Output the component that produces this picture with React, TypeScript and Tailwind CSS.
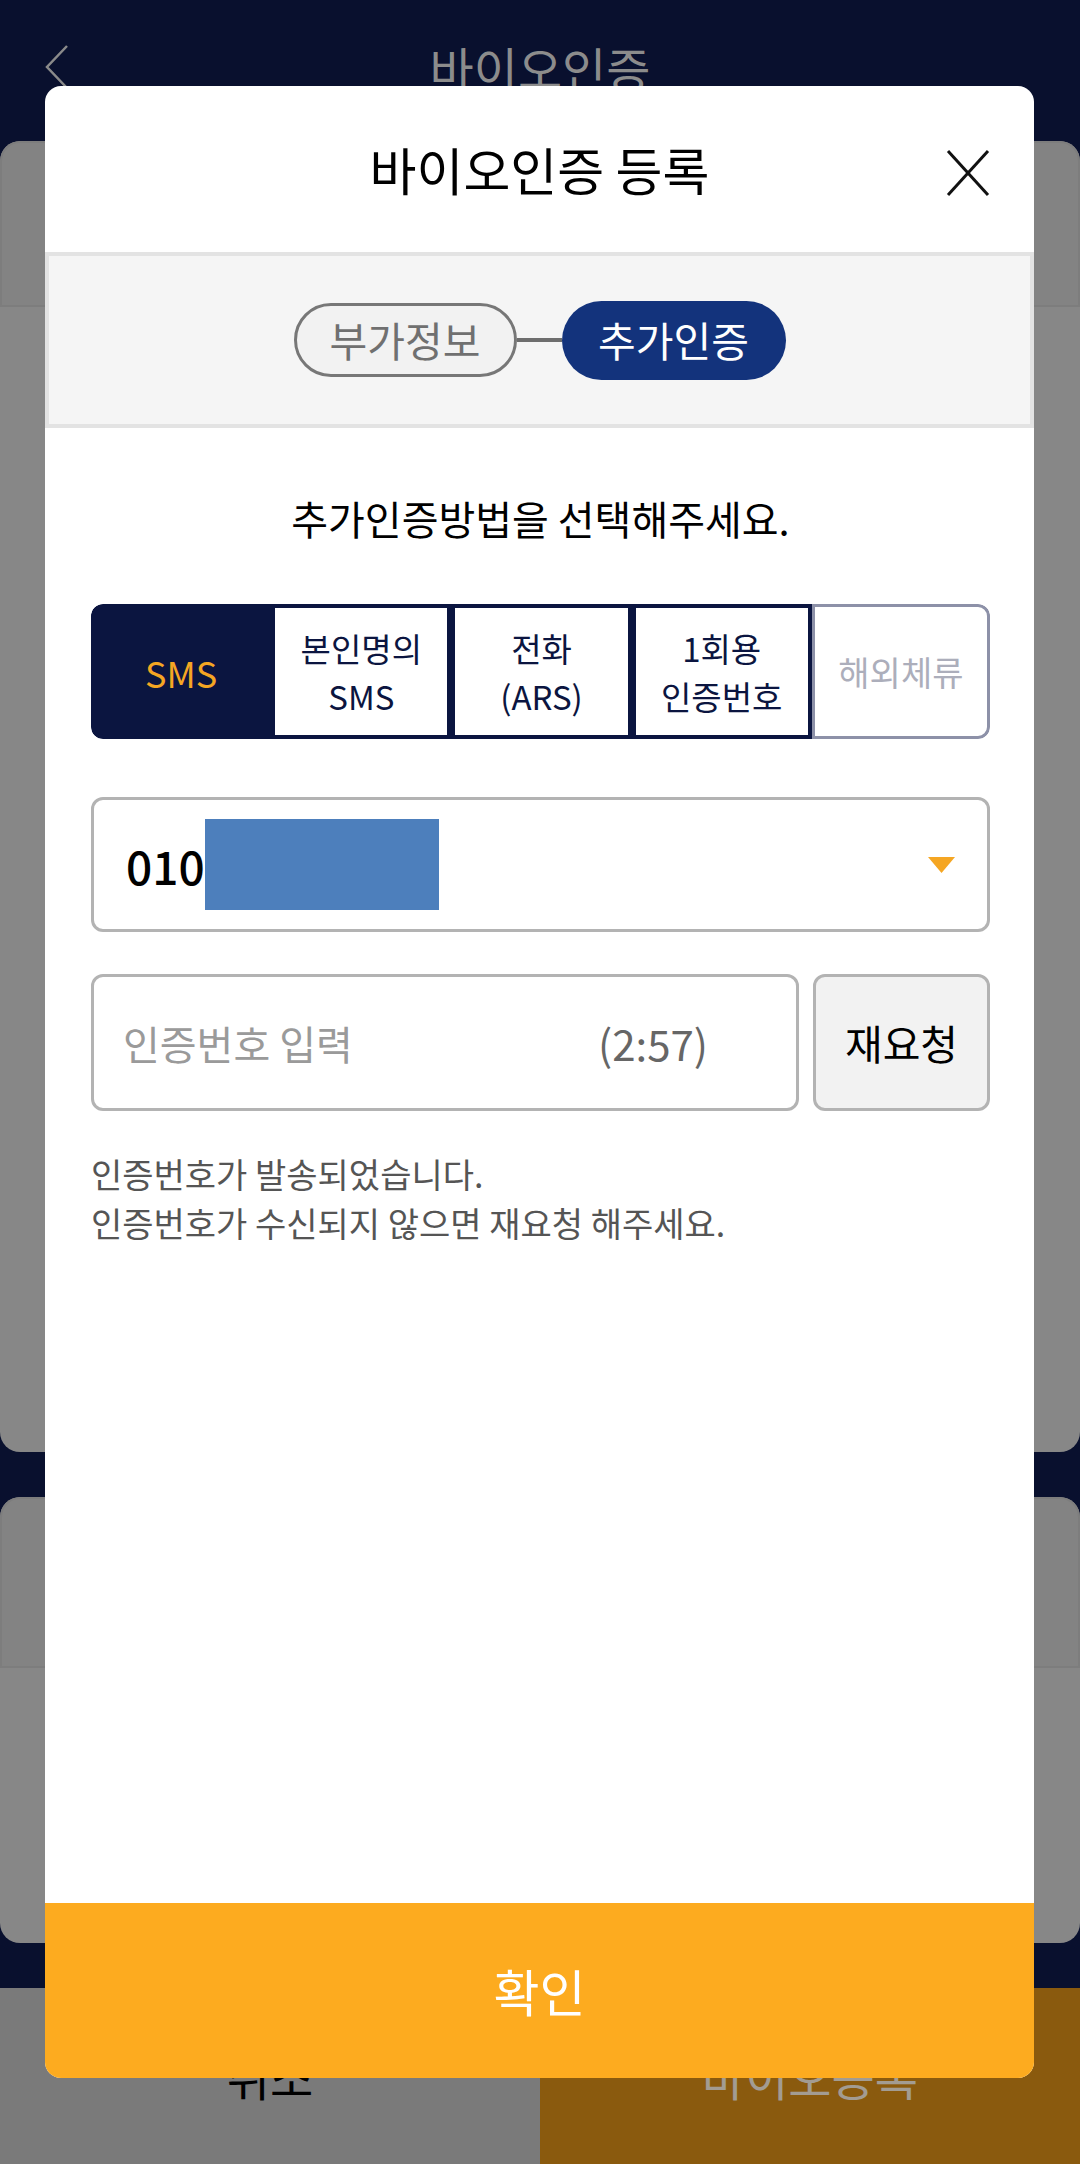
import React from 'react';

const methods = [
  { lines: ['SMS'], state: 'active' },
  { lines: ['본인명의', 'SMS'], state: 'normal' },
  { lines: ['전화', '(ARS)'], state: 'normal' },
  { lines: ['1회용', '인증번호'], state: 'normal' },
  { lines: ['해외체류'], state: 'disabled' },
];

const DimCard = ({ height, headerHeight }: { height: string; headerHeight: string }) => (
  <div className={`${height} w-full rounded-[20px] bg-[#878787] overflow-hidden`}>
    <div className={`${headerHeight} rounded-t-[20px] border-2 border-[#7d7d7d] bg-[#838383]`} />
  </div>
);

const App = () => {
  return (
    <div className="relative w-[1080px] h-[2164px] overflow-hidden bg-[#09102e] font-['Noto_Sans_CJK_KR',sans-serif]">
      {/* dimmed page behind the sheet */}
      <div className="flex flex-col h-full">
        <div className="h-[141px] shrink-0 flex items-center relative">
          <svg width="26" height="46" viewBox="0 0 26 46" className="absolute left-[44px] top-[44px]">
            <polyline points="23,2 3,23 23,44" fill="none" stroke="#8a8a8a" strokeWidth="2.5" />
          </svg>
          <div className="w-full text-center text-[48px] leading-none text-[#8c8c8c] -mt-[8px]">바이오인증</div>
        </div>
        <div className="h-[1311px] shrink-0">
          <DimCard height="h-[1311px]" headerHeight="h-[166px]" />
        </div>
        <div className="h-[45px] shrink-0" />
        <div className="h-[446px] shrink-0">
          <DimCard height="h-[446px]" headerHeight="h-[171px]" />
        </div>
        <div className="h-[45px] shrink-0" />
        <div className="flex-1 flex">
          <div className="w-1/2 bg-[#7a7a7a] flex items-center justify-center text-[47px] text-black">취소</div>
          <div className="w-1/2 bg-[#8a5a0e] flex items-center justify-center text-[47px] text-[#a39c92]">바이오등록</div>
        </div>
      </div>

      {/* bottom sheet dialog */}
      <div className="absolute left-[45px] top-[86px] w-[989px] h-[1992px] bg-white rounded-[16px] flex flex-col overflow-hidden">
        <div className="h-[166px] shrink-0 relative flex items-center justify-center">
          <h2 className="text-[51px] leading-none text-black">바이오인증 등록</h2>
          <svg width="44" height="48" viewBox="0 0 44 48" className="absolute right-[44px] top-[63px]">
            <line x1="2" y1="2" x2="42" y2="46" stroke="#111" strokeWidth="3" />
            <line x1="42" y1="2" x2="2" y2="46" stroke="#111" strokeWidth="3" />
          </svg>
        </div>

        <div className="h-[176px] shrink-0 border-4 border-[#e3e3e3] bg-[#f5f5f5] flex items-center justify-center">
          <div className="w-[223px] h-[74px] rounded-full border-[3px] border-[#777] bg-[#f2f2f2] flex items-center justify-center text-[41px] text-[#707070]">
            부가정보
          </div>
          <div className="w-[45px] h-[4px] bg-[#6e6e6e]" />
          <div className="w-[224px] h-[79px] rounded-full bg-[#13337c] flex items-center justify-center text-[41px] text-white">
            추가인증
          </div>
        </div>

        <div className="pl-[46px] pr-[44px] flex flex-col">
          <p className="mt-[61px] text-center text-[40px] leading-[58px] text-black">추가인증방법을 선택해주세요.</p>

          <div className="mt-[57px] h-[135px] flex rounded-[12px] overflow-hidden">
            {methods.map((m, i) => (
              <div
                key={i}
                className={
                  m.state === 'active'
                    ? 'flex-1 bg-[#0b1540] border-4 border-[#0b1540] rounded-l-[12px] flex flex-col items-center justify-center text-[36px] leading-[52px] text-[#f5a623]'
                    : m.state === 'disabled'
                    ? 'flex-1 bg-white border-[3px] border-[#8d91a8] rounded-r-[12px] flex flex-col items-center justify-center text-[34px] leading-[50px] text-[#acaebb]'
                    : 'flex-1 bg-white border-4 border-[#0b1540] flex flex-col items-center justify-center text-[33px] leading-[48px] text-[#0b1540]'
                }
              >
                {m.lines.map((l) => (
                  <span key={l}>{l}</span>
                ))}
              </div>
            ))}
          </div>

          <div className="mt-[58px] h-[135px] rounded-[12px] border-[3px] border-[#b3b3b3] flex items-center pl-[32px] pr-[32px]">
            <span className="text-[46px] font-medium text-black leading-none">010</span>
            <span className="w-[234px] h-[91px] bg-[#4d7fbc]" />
            <svg width="27" height="16" viewBox="0 0 27 16" className="ml-auto">
              <polygon points="0,0 27,0 13.5,16" fill="#f5a623" />
            </svg>
          </div>

          <div className="mt-[42px] h-[137px] flex gap-[14px]">
            <div className="flex-1 rounded-[12px] border-[3px] border-[#b3b3b3] flex items-center pl-[29px] pr-[88px]">
              <span className="text-[40px] text-[#9a9a9a]">인증번호 입력</span>
              <span className="ml-auto text-[42px] text-[#666]">(2:57)</span>
            </div>
            <button className="w-[177px] rounded-[12px] border-[3px] border-[#b3b3b3] bg-[#f2f2f2] text-[41px] text-black">
              재요청
            </button>
          </div>

          <div className="mt-[38px] text-[34px] leading-[49px] text-[#555]">
            <p>인증번호가 발송되었습니다.</p>
            <p>인증번호가 수신되지 않으면 재요청 해주세요.</p>
          </div>
        </div>

        <button className="mt-auto h-[175px] shrink-0 bg-[#fdab1f] text-white text-[50px]">확인</button>
      </div>
    </div>
  );
};

export default App;
